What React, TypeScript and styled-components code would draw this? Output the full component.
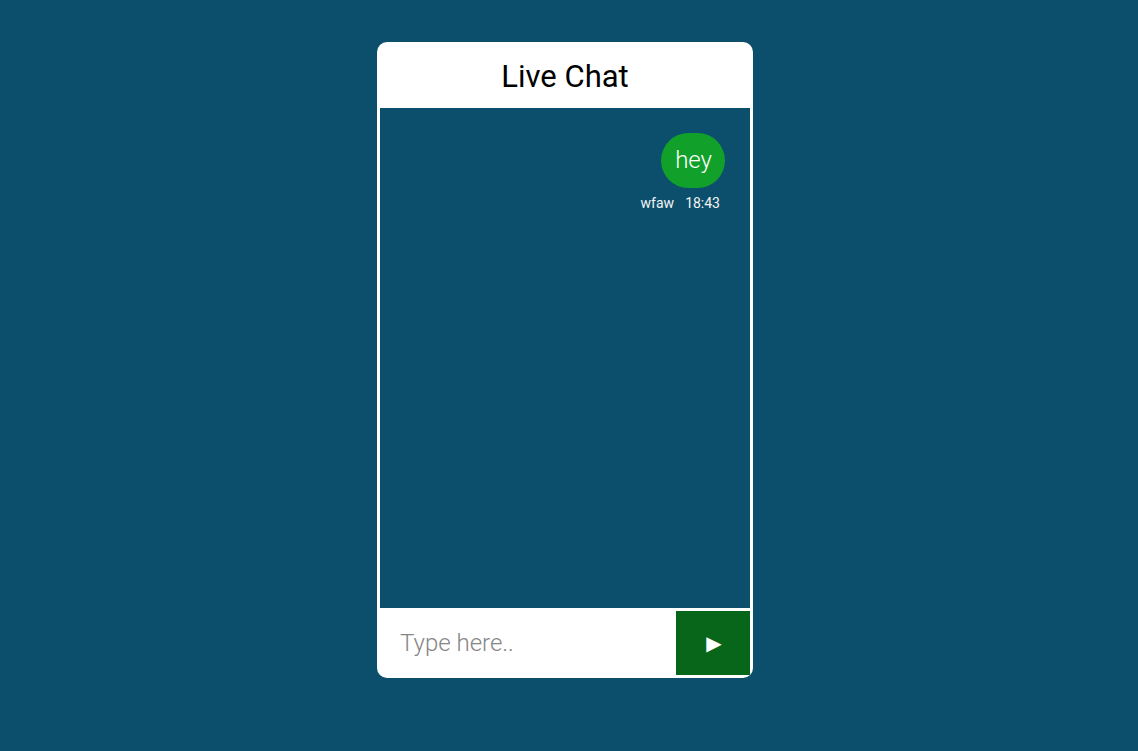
import React from "react";
import styled, { createGlobalStyle } from "styled-components";

const GlobalStyle = createGlobalStyle`
  html, body {
    margin: 0;
    padding: 0;
    background: #0c4f6c;
    font-family: Roboto, "Liberation Sans", Arial, sans-serif;
  }
  * { box-sizing: border-box; }
`;

const Page = styled.div`
  display: flex;
  justify-content: center;
  align-items: flex-start;
  padding: 42px 8px 0 0;
`;

const Card = styled.div`
  width: 376px;
  background: #ffffff;
  border-radius: 10px;
  padding: 0 3px 3px;
  display: flex;
  flex-direction: column;
`;

const Header = styled.div`
  height: 66px;
  display: flex;
  align-items: center;
  justify-content: center;
`;

const Title = styled.h1`
  margin: 0;
  font-size: 31px;
  font-weight: 400;
  color: #000;
  line-height: 1;
  padding-top: 2px;
`;

const Messages = styled.div`
  height: 500px;
  background: #0c4f6c;
  padding: 25px;
  display: flex;
  flex-direction: column;
  align-items: flex-end;
`;

const Message = styled.div<{ $mine?: boolean }>`
  display: flex;
  flex-direction: column;
  align-items: ${(p) => (p.$mine ? "flex-end" : "flex-start")};
`;

const Bubble = styled.div`
  background: #11a02a;
  color: #ffffff;
  font-size: 24px;
  font-weight: 300;
  line-height: 31px;
  padding: 12px 13px 12px 14px;
  border-radius: 28px;
`;

const Meta = styled.div`
  display: flex;
  gap: 11px;
  margin-top: 7px;
  margin-right: 5px;
  color: #f4f4f4;
  font-size: 14px;
  line-height: 16px;
`;

const Form = styled.form`
  margin-top: 3px;
  height: 64px;
  display: flex;
`;

const Input = styled.input`
  flex: 1;
  min-width: 0;
  border: none;
  outline: none;
  background: #fff;
  padding: 0 0 0 20px;
  font-family: Roboto, "Liberation Sans", Arial, sans-serif;
  font-size: 24px;
  font-weight: 300;
  color: #222;
  caret-color: #000;
  &::placeholder {
    color: #858585;
  }
`;

const SendButton = styled.button`
  width: 74px;
  height: 64px;
  border: none;
  background: #08661a;
  color: #ffffff;
  font-family: "DejaVu Sans", sans-serif;
  font-size: 20px;
  padding: 0 0 0 2px;
  cursor: pointer;
  display: flex;
  align-items: center;
  justify-content: center;
`;

export default function App() {
  return (
    <>
      <GlobalStyle />
      <Page>
        <Card>
          <Header>
            <Title>Live Chat</Title>
          </Header>
          <Messages>
            <Message $mine>
              <Bubble>hey</Bubble>
              <Meta>
                <span>wfaw</span>
                <span>18:43</span>
              </Meta>
            </Message>
          </Messages>
          <Form onSubmit={(e) => e.preventDefault()}>
            <Input placeholder="Type here.." autoFocus />
            <SendButton type="submit">▶</SendButton>
          </Form>
        </Card>
      </Page>
    </>
  );
}
